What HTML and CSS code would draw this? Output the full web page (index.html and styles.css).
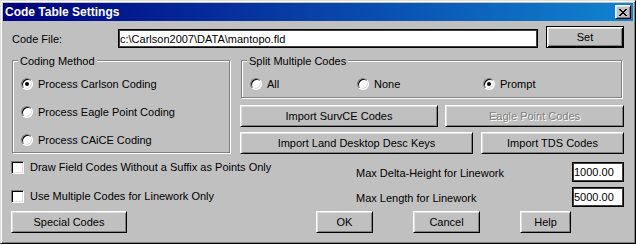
FILE: index.html
```html
<!DOCTYPE html>
<html lang="en">
<head>
<meta charset="utf-8">
<title>Code Table Settings</title>
<link rel="stylesheet" href="styles.css">
</head>
<body>
<div class="window">
  <div class="titlebar">
    <span class="title">Code Table Settings</span>
    <button class="close" aria-label="Close">
      <svg width="8" height="7" viewBox="0 0 8 7" shape-rendering="crispEdges">
        <rect x="0" y="0" width="2" height="1"/><rect x="6" y="0" width="2" height="1"/>
        <rect x="1" y="1" width="2" height="1"/><rect x="5" y="1" width="2" height="1"/>
        <rect x="2" y="2" width="4" height="1"/>
        <rect x="3" y="3" width="2" height="1"/>
        <rect x="2" y="4" width="4" height="1"/>
        <rect x="1" y="5" width="2" height="1"/><rect x="5" y="5" width="2" height="1"/>
        <rect x="0" y="6" width="2" height="1"/><rect x="6" y="6" width="2" height="1"/>
      </svg>
    </button>
  </div>
  <div class="content">
    <div class="file-row">
      <span class="file-label">Code File:</span>
      <input class="field file-field" type="text" value="c:\Carlson2007\DATA\mantopo.fld">
      <button class="btn btn-default set-btn">Set</button>
    </div>

    <div class="main-row">
      <div class="group coding">
        <div class="group-title">Coding Method</div>
        <div class="radio-list">
          <div class="radio-item"><span class="radio checked"></span><span>Process Carlson Coding</span></div>
          <div class="radio-item"><span class="radio"></span><span>Process Eagle Point Coding</span></div>
          <div class="radio-item"><span class="radio"></span><span>Process CAiCE Coding</span></div>
        </div>
      </div>
      <div class="right-col">
        <div class="group split">
          <div class="group-title">Split Multiple Codes</div>
          <div class="radio-row">
            <div class="radio-item opt-all"><span class="radio"></span><span>All</span></div>
            <div class="radio-item opt-none"><span class="radio"></span><span>None</span></div>
            <div class="radio-item"><span class="radio checked"></span><span>Prompt</span></div>
          </div>
        </div>
        <div class="btn-row row-a">
          <button class="btn survce">Import SurvCE Codes</button>
          <button class="btn eagle" disabled>Eagle Point Codes</button>
        </div>
        <div class="btn-row row-b">
          <button class="btn ldd">Import Land Desktop Desc Keys</button>
          <button class="btn tds">Import TDS Codes</button>
        </div>
      </div>
    </div>

    <div class="options">
      <div class="checks">
        <div class="check-item"><span class="checkbox"></span><span>Draw Field Codes Without a Suffix as Points Only</span></div>
        <div class="check-item"><span class="checkbox"></span><span>Use Multiple Codes for Linework Only</span></div>
      </div>
      <div class="limits">
        <span class="limit-label">Max Delta-Height for Linework</span>
        <input class="field num-field" type="text" value="1000.00">
        <span class="limit-label">Max Length for Linework</span>
        <input class="field num-field" type="text" value="5000.00">
      </div>
    </div>

    <div class="footer">
      <button class="btn special">Special Codes</button>
      <button class="btn ok">OK</button>
      <button class="btn cancel">Cancel</button>
      <button class="btn help">Help</button>
    </div>
  </div>
</div>
</body>
</html>
```
FILE: styles.css
```css
html, body {
  margin: 0;
  padding: 0;
  background: #c0c0c0;
}

.window {
  box-sizing: border-box;
  width: 636px;
  height: 244px;
  background: #c0c0c0;
  border: 1px solid;
  border-color: #dfdfdf #000 #000 #dfdfdf;
  box-shadow: inset 1px 1px #fff, inset -1px -1px #808080;
  padding: 2px;
  font: 11px/13px "Liberation Sans", Arial, sans-serif;
  color: #000;
}

/* Title bar */
.titlebar {
  height: 18px;
  display: flex;
  align-items: center;
  justify-content: space-between;
  background: linear-gradient(to right, #000080, #1084d0);
  padding: 0 2px;
}
.title {
  color: #fff;
  font-weight: bold;
  font-size: 12px;
  line-height: 18px;
}
.close {
  box-sizing: border-box;
  width: 16px;
  height: 14px;
  padding: 0;
  display: flex;
  align-items: center;
  justify-content: center;
  background: #c0c0c0;
  border: 1px solid;
  border-color: #fff #000 #000 #fff;
  box-shadow: inset 1px 1px #dfdfdf, inset -1px -1px #808080;
}
.close svg { fill: #000; display: block; margin-left: -1px; }

/* Content */
.content {
  padding: 5px 9px 0;
}

.field {
  box-sizing: border-box;
  margin: 0;
  padding: 0 1px;
  font: inherit;
  color: #000;
  background: #fff;
  border: 1px solid #000;
  box-shadow: inset 1px 1px #404040, inset -1px -1px #404040;
  outline: none;
}

.btn {
  box-sizing: border-box;
  height: 22px;
  margin: 0;
  padding: 0;
  font: inherit;
  color: #000;
  background: #c0c0c0;
  border: 1px solid;
  border-color: #fff #000 #000 #fff;
  box-shadow: inset 1px 1px #dfdfdf, inset -1px -1px #808080;
  text-align: center;
}
.btn-default {
  border-color: #000;
  box-shadow: inset 1px 1px #fff, inset -1px -1px #000, inset 2px 2px #dfdfdf, inset -2px -2px #808080;
}
.btn:disabled {
  color: #808080;
  text-shadow: 1px 1px #fff;
}

/* Row 1 */
.file-row {
  display: flex;
  align-items: flex-start;
  height: 22px;
}
.file-label {
  width: 106px;
  margin-top: 7px;
}
.file-field {
  width: 420px;
  height: 19px;
  margin-top: 3px;
}
.set-btn {
  width: 78px;
  margin-left: 8px;
}

/* Group boxes */
.main-row {
  display: flex;
  align-items: flex-start;
  margin-top: 12px;
}
.group {
  box-sizing: border-box;
  border: 1px solid #808080;
  box-shadow: inset 1px 1px #fff, 1px 1px #fff;
}
.group-title {
  width: fit-content;
  margin: -6px 0 0 5px;
  padding: 0 2px;
  background: #c0c0c0;
  line-height: 13px;
}
.coding {
  width: 218px;
  height: 93px;
}
.radio-list {
  display: flex;
  flex-direction: column;
  gap: 12px;
  padding: 8px 0 0 8px;
}
.radio-item {
  display: flex;
  align-items: center;
  gap: 5px;
  height: 16px;
}
.radio {
  box-sizing: border-box;
  width: 12px;
  height: 12px;
  border-radius: 50%;
  background: #fff;
  border: 1px solid;
  border-color: #808080 #fff #fff #808080;
  box-shadow: inset 1px 1px #000, inset -1px -1px #dfdfdf;
  display: flex;
  align-items: center;
  justify-content: center;
  flex: none;
}
.radio.checked::after {
  content: "";
  width: 4px;
  height: 4px;
  border-radius: 50%;
  background: #000;
}

.right-col {
  width: 384px;
  margin-left: 10px;
  display: flex;
  flex-direction: column;
}
.split {
  width: 381px;
  height: 38px;
  margin-left: 1px;
}
.radio-row {
  display: flex;
  padding: 8px 0 0 8px;
}
.opt-all { width: 107px; }
.opt-none { width: 126px; }

.btn-row {
  display: flex;
  justify-content: space-between;
}
.row-a { margin-top: 7px; }
.row-b { margin-top: 5px; }
.survce { width: 198px; }
.eagle { width: 179px; }
.ldd { width: 233px; }
.tds { width: 143px; }

/* Options */
.options {
  display: flex;
  justify-content: space-between;
  align-items: flex-start;
}
.checks {
  display: flex;
  flex-direction: column;
  gap: 16px;
  margin: 7px 0 0 -1px;
}
.check-item {
  display: flex;
  align-items: center;
  gap: 6px;
  height: 13px;
}
.checkbox {
  box-sizing: border-box;
  width: 13px;
  height: 13px;
  background: #fff;
  border: 1px solid;
  border-color: #808080 #fff #fff #808080;
  box-shadow: inset 1px 1px #000, inset -1px -1px #dfdfdf;
  flex: none;
}
.limits {
  display: grid;
  grid-template-columns: 216px 52px;
  row-gap: 5px;
  margin-top: 8px;
}
.limit-label {
  padding-top: 5px;
}
.num-field {
  width: 52px;
  height: 20px;
}

/* Footer */
.footer {
  display: flex;
  margin-top: 4px;
}
.special { width: 116px; margin-left: -1px; }
.ok { width: 57px; margin-left: 189px; }
.cancel { width: 67px; margin-left: 40px; }
.help { width: 51px; margin-left: 40px; }
```
